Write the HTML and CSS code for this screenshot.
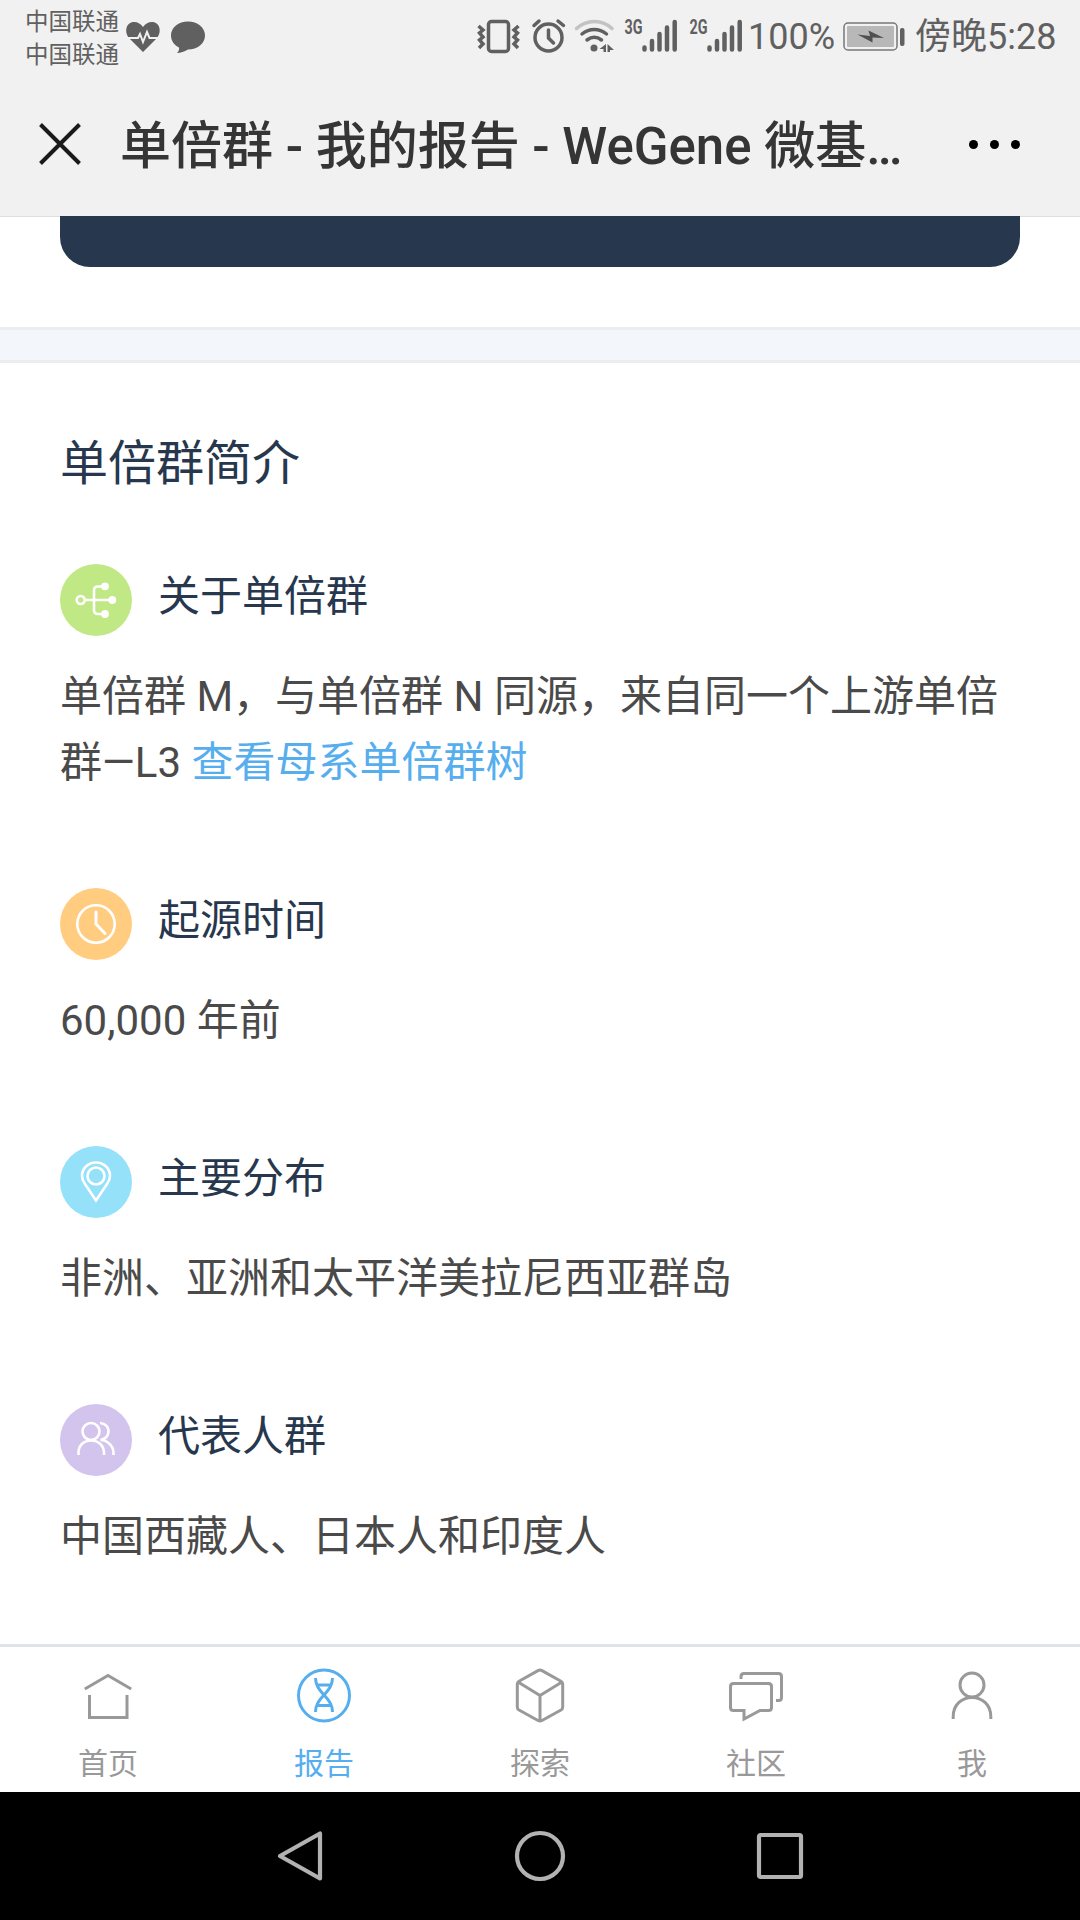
FILE: index.html
```html
<!DOCTYPE html>
<html lang="zh-CN">
<head>
  <meta charset="UTF-8">
  <title>单倍群 - 我的报告 - WeGene 微基因</title>
  <link rel="stylesheet" href="styles.css">
</head>
<body>

  <!-- Status bar -->
  <div class="status-bar">
    <div class="carriers">
      <span>中国联通</span>
      <span>中国联通</span>
    </div>
    <svg class="icon-notice" width="82" height="34" viewBox="0 0 82 34">
      <path d="M18 32 L4 18 C-1 12 1 2 9 2 C13 2 16 4 18 7 C20 4 23 2 27 2 C35 2 37 12 32 18 Z" fill="#606060"/>
      <path d="M2 18 H13 L15 14 L18 22 L22 12 L24.5 18 H34" fill="none" stroke="#f1f1f1" stroke-width="2"/>
      <path d="M63 1.500 C72.500 1.500 80 7.500 80 15.500 C80 23.500 72.500 29.500 63 29.500 C59 31.500 56 33 52 33 C53.500 31.500 54.500 29.500 54 27.500 C49 25 46 20.500 46 15.500 C46 7.500 53.500 1.500 63 1.500 Z" fill="#606060"/>
    </svg>
    <svg class="icon-system" width="270" height="36" viewBox="0 0 270 36">
      <g fill="none" stroke="#606060" stroke-width="3.500">
        <rect x="10.500" y="3.500" width="20" height="30" rx="3"/>
        <path d="M0.500 8 L5 12 L1.500 15 L5 19 L1.500 22 L5 26 L1 30" stroke-width="3.500"/>
        <path d="M40.500 8 L36 12 L39.500 15 L36 19 L39.500 22 L36 26 L40 30" stroke-width="3.500"/>
        <circle cx="70.500" cy="19.500" r="13.500"/>
        <path d="M70.500 12 V20 L75.500 25 M56 7.500 L61 3 M80 3 L85.500 7.500" stroke-linecap="round"/>
        <path d="M98.500 10.500 C108.500 1 124.500 1 134 10.500" stroke="#c3c3c3" stroke-linecap="round"/>
        <path d="M104 16 C111.500 10 121 10 128.500 16 M109 22 C113.500 18.500 119 18.500 123.500 22" stroke-linecap="round"/>
      </g>
      <g fill="#606060">
        <circle cx="116" cy="30" r="3.500"/>
        <path d="M128 26 V34 H125.500 V31 H121.500 Z M129.500 26 V34 H132 V32 H136 Z"/>
      </g>
      <text class="net-type" x="146.500" y="16" textLength="18" lengthAdjust="spacingAndGlyphs">3G</text>
      <text class="net-type" x="211.500" y="16" textLength="18" lengthAdjust="spacingAndGlyphs">2G</text>
      <g stroke="#606060" stroke-width="4.500" stroke-linecap="round">
        <path d="M166.500 29.500 V31.500 M174 23 V31.500 M181.500 16 V31.500 M189 9.500 V31.500 M196.700 4 V31.500"/>
        <path d="M231.500 29.500 V31.500 M239 23 V31.500 M246.500 16 V31.500 M254 9.500 V31.500 M261.700 4 V31.500"/>
      </g>
    </svg>
    <span class="battery-text">100%</span>
    <svg class="icon-battery" width="62" height="30" viewBox="0 0 62 30">
      <rect x="1" y="1" width="53" height="27" rx="4" fill="none" stroke="#777" stroke-width="1.500"/>
      <rect x="4" y="4" width="47" height="21" rx="1" fill="#b8b8b8"/>
      <path d="M14.500 12.500 L27 14 L25.500 8.500 L41 16 L29.500 15.500 L29.500 20.500 Z" fill="#505050"/>
      <rect x="57" y="6" width="4.500" height="18" rx="2" fill="#606060"/>
    </svg>
    <span class="clock">傍晚5:28</span>
  </div>

  <!-- Title bar -->
  <div class="title-bar">
    <svg class="close" width="44" height="44" viewBox="0 0 44 44">
      <path d="M2.500 2.500 L41.500 41.500 M41.500 2.500 L2.500 41.500" stroke="#1a1a1a" stroke-width="4"/>
    </svg>
    <h1>单倍群 - 我的报告 - WeGene 微基…</h1>
    <div class="more"><i></i><i></i><i></i></div>
  </div>

  <main>
    <div class="card-end"></div>
    <div class="divider"></div>

    <section class="intro">
      <h2>单倍群简介</h2>

      <div class="item">
        <div class="item-head">
          <svg class="badge green" viewBox="0 0 72 72">
            <circle cx="20.700" cy="36" r="4"/>
            <path d="M25 36 H50 M43 22.500 H38 Q34 22.500 34 26.500 V46 Q34 50 38 50 H43"/>
            <g class="dots"><circle cx="52.300" cy="36" r="3.900"/><circle cx="45" cy="22.300" r="3.900"/><circle cx="45" cy="50" r="3.900"/></g>
          </svg>
          <h3>关于单倍群</h3>
        </div>
        <p>单倍群 M，与单倍群 N 同源，来自同一个上游单倍群—L3 <a href="#">查看母系单倍群树</a></p>
      </div>

      <div class="item">
        <div class="item-head">
          <svg class="badge orange" viewBox="0 0 72 72">
            <circle cx="36" cy="36" r="18.700"/>
            <path d="M36 24 V36 L45 45.500" stroke-width="3" stroke-linecap="round"/>
          </svg>
          <h3>起源时间</h3>
        </div>
        <p>60,000 年前</p>
      </div>

      <div class="item">
        <div class="item-head">
          <svg class="badge blue" viewBox="0 0 72 72">
            <path d="M36 54.500 L25 38 C22.500 34.500 22 32 22 30 C22 22 28.500 16.500 36 16.500 C43.500 16.500 50 22 50 30 C50 32 49.500 34.500 47 38 Z"/>
            <circle cx="36" cy="30" r="8.500"/>
          </svg>
          <h3>主要分布</h3>
        </div>
        <p>非洲、亚洲和太平洋美拉尼西亚群岛</p>
      </div>

      <div class="item">
        <div class="item-head">
          <svg class="badge purple" viewBox="0 0 72 72">
            <circle cx="31" cy="27.500" r="8.500"/>
            <path d="M18.500 51 V49 C18.500 41 24 36.500 31 36.500 C38.500 36.500 44 41.500 44 49 V51 M40 19 C45.500 19.500 48.500 23 48.500 27.500 C48.500 32 45 35.500 40.500 36 C48 36.500 53.500 42 53.500 49 V51"/>
          </svg>
          <h3>代表人群</h3>
        </div>
        <p>中国西藏人、日本人和印度人</p>
      </div>
    </section>
  </main>

  <!-- Tabs -->
  <nav class="tabs">
    <a class="tab">
      <svg viewBox="0 0 60 60"><path d="M6.800 24 L30 10.500 L53.200 24 M11.500 30 V52.500 H49 V30"/></svg>
      <span>首页</span>
    </a>
    <a class="tab active">
      <svg viewBox="0 0 60 60">
        <circle cx="30" cy="30.500" r="25.500"/>
        <path d="M21.500 13 C21.500 21 26 25.500 30 30 C34 34.500 38.500 39 38.500 47 M38.500 13 C38.500 21 34 25.500 30 30 C26 34.500 21.500 39 21.500 47 M23.500 20 H36.500 M23.500 40.500 H36.500"/>
      </svg>
      <span>报告</span>
    </a>
    <a class="tab">
      <svg viewBox="0 0 60 60"><path d="M28 5.600 Q30 4.500 32 5.600 L51 16.200 Q52.700 17.200 52.700 19 V42 Q52.700 44 51 45 L32 55.500 Q30 56.500 28 55.500 L9 45 Q7.300 44 7.300 42 V19 Q7.300 17.200 9 16.200 Z M8 17 L30 30.500 L52 17 M30 30.500 V56"/></svg>
      <span>探索</span>
    </a>
    <a class="tab">
      <svg viewBox="0 0 60 60"><path d="M7.500 18.500 H42.500 Q45.500 18.500 45.500 21.500 V42.500 Q45.500 45.500 42.500 45.500 H34 L18 54 V45.500 H7.500 Q4.500 45.500 4.500 42.500 V21.500 Q4.500 18.500 7.500 18.500 Z M15 14 V11.500 Q15 8.500 18 8.500 H52.500 Q55.500 8.500 55.500 11.500 V32.500 Q55.500 35.500 52.500 35.500 H50"/></svg>
      <span>社区</span>
    </a>
    <a class="tab">
      <svg viewBox="0 0 60 60"><circle cx="30" cy="20" r="12"/><path d="M11.200 54 V51.500 C11.200 40 19.500 32.500 30 32.500 C40.500 32.500 48.800 40 48.800 51.500 V54"/></svg>
      <span>我</span>
    </a>
  </nav>

  <!-- Android navigation -->
  <div class="android-nav">
    <svg viewBox="0 0 54 54"><path d="M47 4.500 V49.500 L7 27 Z"/></svg>
    <svg viewBox="0 0 54 54"><circle cx="27" cy="27" r="23"/></svg>
    <svg viewBox="0 0 54 54"><rect x="6" y="6" width="42" height="42" rx="1.500"/></svg>
  </div>

</body>
</html>
```
FILE: styles.css
```css
* {
  box-sizing: border-box;
}

body {
  font-family: Roboto, 'Noto Sans CJK SC', sans-serif;
  background: #fff;
  margin: 0;
  width: 1080px;
  height: 1920px;
  display: flex;
  flex-direction: column;
  overflow: hidden;
}

h1, h2, h3, p {
  margin: 0;
  font-weight: 400;
}

svg {
  display: block;
  flex: none;
  overflow: visible;
}

/* status bar */
.status-bar {
  flex: none;
  height: 72px;
  background: #f1f1f1;
  color: #606060;
  display: flex;
  align-items: flex-start;
  padding-left: 25px;
  white-space: nowrap;
}

.carriers {
  display: flex;
  flex-direction: column;
  width: 100px;
  padding-top: 6px;
  font-size: 23.5px;
  line-height: 33px;
}

.icon-notice {
  margin-top: 20px;
}

.icon-system {
  margin: 18px 0 0 271px;
}

.net-type {
  font-size: 21px;
  font-weight: 700;
  fill: #606060;
}

.battery-text,
.clock {
  font-size: 36px;
  line-height: 75px;
}

.battery-text {
  width: 95px;
}

.icon-battery {
  margin: 22px 10px 0 0;
}

/* title bar */
.title-bar {
  flex: none;
  height: 145px;
  background: #f1f1f1;
  border-bottom: 1px solid #dedede;
  display: flex;
  align-items: center;
  padding: 0 60px 0 38px;
}

.title-bar h1 {
  width: 800px;
  margin-left: 38px;
  padding-bottom: 4px;
  color: #353535;
  font-size: 51px;
  font-weight: 500;
  white-space: nowrap;
}

.more {
  display: flex;
  gap: 12px;
  margin-left: auto;
}

.more i {
  width: 9px;
  height: 9px;
  border-radius: 50%;
  background: #000;
}

/* content */
main {
  flex: 1;
  min-height: 0;
}

.card-end {
  height: 51px;
  margin: -1px 60px 60px;
  background: #27374d;
  border-radius: 0 0 30px 30px;
}

.divider {
  height: 36px;
  background: #f3f6fa;
  border-top: 3px solid #ebeef1;
  border-bottom: 3px solid #ebeef1;
}

.intro {
  padding: 65px 60px 0;
}

.intro h2 {
  color: #27374d;
  font-size: 48px;
  line-height: 72px;
  margin-bottom: 64px;
}

.item {
  margin-bottom: 92px;
}

.item-head {
  display: flex;
  gap: 26px;
  margin-bottom: 28px;
}

.item-head h3 {
  color: #27374d;
  font-size: 42px;
  line-height: 66px;
}

.item p {
  color: #4a4a4a;
  font-size: 42px;
  line-height: 66px;
}

.item a {
  color: #56aeef;
  text-decoration: none;
}

.badge {
  width: 72px;
  height: 72px;
  border-radius: 50%;
  fill: none;
  stroke: #fff;
  stroke-width: 2.6;
}

.badge .dots {
  fill: #fff;
  stroke: none;
}

.green {
  background: #c0e885;
}

.orange {
  background: #ffcc80;
}

.blue {
  background: #96e1fa;
}

.purple {
  background: #d2c4ec;
}

/* tabs */
.tabs {
  flex: none;
  height: 148px;
  background: #fff;
  border-top: 3px solid #e0e4e8;
  display: flex;
}

.tab {
  flex: 1;
  display: flex;
  flex-direction: column;
  align-items: center;
  padding-top: 18px;
  color: #999;
  font-size: 30px;
  line-height: 40px;
}

.tab svg {
  width: 60px;
  height: 60px;
  margin-bottom: 19px;
  fill: none;
  stroke: currentColor;
  stroke-width: 3;
}

.tab.active {
  color: #56aeef;
}

/* android navigation */
.android-nav {
  flex: none;
  height: 128px;
  background: #000;
  display: flex;
  justify-content: center;
  align-items: center;
  gap: 186px;
}

.android-nav svg {
  width: 54px;
  height: 54px;
  fill: none;
  stroke: #b2b2b2;
  stroke-width: 4.2;
  stroke-linejoin: round;
}
```
